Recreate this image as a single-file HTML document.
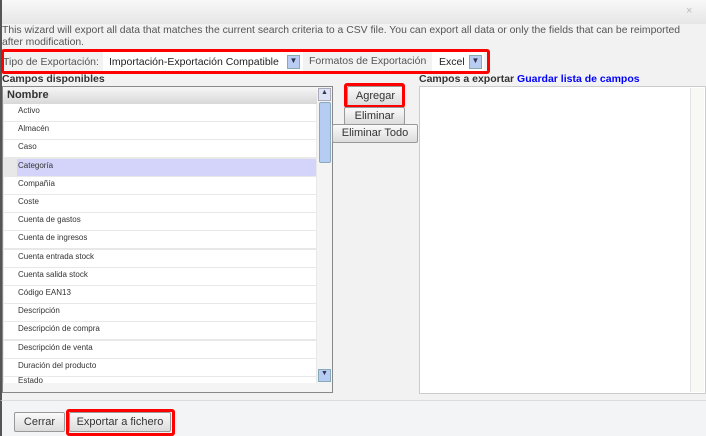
<!DOCTYPE html>
<html><head><meta charset="utf-8"><style>
*{margin:0;padding:0;box-sizing:border-box}
body{width:706px;height:436px;overflow:hidden;background:#eeeff1;font-family:"Liberation Sans",sans-serif;position:relative;color:#333}
.abs{position:absolute}
.title{left:0;top:0;width:706px;height:24px;background:linear-gradient(#f8f8f8,#e6e6e6);border-left:2px solid #555}
.btn{position:absolute;background:linear-gradient(#fafafa,#dcdcdc);border:1px solid #999;font-size:11px;color:#333;text-align:center;border-radius:2px}
.red{position:absolute;border:3px solid #f00;border-radius:3px}
.row{position:absolute;left:4px;width:312px;height:17px;background:#fff;font-size:8px;color:#333;padding-left:14px;line-height:13px}
.sel{background:#d4d4fa;left:17px;width:299px;padding-left:1px}
</style></head><body>
<div class="abs title"></div>
<div class="abs" style="left:686px;top:5px;font-size:11px;color:#bbb">×</div>
<div class="abs" style="left:0;top:24px;width:706px;height:376px;background:#f2f2f2;border-left:2px solid #555"></div>
<div class="abs" style="left:2px;top:25px;width:685px;font-size:10.4px;line-height:12px;color:#555">This wizard will export all data that matches the current search criteria to a CSV file. You can export all data or only the fields that can be reimported after modification.</div>
<div class="abs" style="left:3px;top:56px;font-size:10.5px;color:#555">Tipo de Exportación:</div>
<div class="abs" style="left:103px;top:52px;width:200px;height:19px;background:#fff"></div>
<div class="abs" style="left:109px;top:56px;font-size:10.5px;color:#222">Importación-Exportación Compatible</div>
<div class="abs" style="left:287px;top:55px;width:13px;height:14px;background:#b9cdf2;border:1px solid #8aa;font-size:8px;text-align:center;color:#335">▼</div>
<div class="abs" style="left:309px;top:55px;font-size:10.5px;color:#555">Formatos de Exportación</div>
<div class="abs" style="left:432px;top:52px;width:52px;height:19px;background:#fff"></div>
<div class="abs" style="left:439px;top:56px;font-size:10.5px;color:#222">Excel</div>
<div class="abs" style="left:469px;top:55px;width:13px;height:14px;background:#b9cdf2;border:1px solid #8aa;font-size:8px;text-align:center;color:#335">▼</div>
<div class="red" style="left:1px;top:49px;width:489px;height:25px"></div>
<div class="abs" style="left:2px;top:73px;font-size:10.5px;font-weight:bold;color:#333">Campos disponibles</div>
<div class="abs" style="left:2px;top:86px;width:331px;height:307px;background:#e8e8e8;border:1px solid #888"></div>
<div class="abs" style="left:3px;top:87px;width:314px;height:17px;background:linear-gradient(#f6f6f6,#d8d8d8);font-size:11px;font-weight:bold;padding:2px 0 0 4px;color:#333">Nombre</div>
<div class="abs" style="left:317px;top:87px;width:15px;height:305px;background:#f4f4f4"></div>
<div class="abs" style="left:318px;top:88px;width:13px;height:13px;background:#dde5f5;border:1px solid #aab;font-size:7px;text-align:center;color:#335">▲</div>
<div class="abs" style="left:319px;top:102px;width:12px;height:61px;background:#b6ccf3;border:1px solid #8ab;border-radius:2px"></div>
<div class="abs" style="left:318px;top:369px;width:13px;height:13px;background:#b6ccf3;border:1px solid #8ab;font-size:7px;text-align:center;color:#335">▼</div>
<div id="rows"></div>
<div class="abs" style="left:4px;top:377px;width:312px;height:6px;background:#fff;overflow:hidden;font-size:8px;padding-left:14px;line-height:8px">Estado</div>
<div class="abs" style="left:3px;top:383px;width:314px;height:9px;background:#f4f4f4"></div>
<div class="btn" style="left:347px;top:86px;width:57px;height:20px;line-height:18px">Agregar</div>
<div class="red" style="left:344px;top:83px;width:61px;height:25px"></div>
<div class="btn" style="left:344px;top:107px;width:61px;height:18px;line-height:16px">Eliminar</div>
<div class="btn" style="left:332px;top:124px;width:86px;height:19px;line-height:17px">Eliminar Todo</div>
<div class="abs" style="left:419px;top:73px;font-size:10.5px;font-weight:bold;color:#333">Campos a exportar <span style="color:#00f">Guardar lista de campos</span></div>
<div class="abs" style="left:419px;top:86px;width:287px;height:308px;background:#fff;border:1px solid #ccc"></div>
<div class="abs" style="left:690px;top:88px;width:14px;height:304px;background:#f8f8f4;border-left:1px solid #e4e4e4"></div>
<div class="abs" style="left:0;top:400px;width:706px;height:36px;background:#f3f4f6;border-left:2px solid #555;border-top:1px solid #ddd"></div>
<div class="btn" style="left:14px;top:412px;width:51px;height:20px;line-height:18px">Cerrar</div>
<div class="btn" style="left:69px;top:412px;width:102px;height:20px;line-height:18px">Exportar a fichero</div>
<div class="red" style="left:66px;top:409px;width:109px;height:27px"></div>
<script>
var n=["Activo","Almacén","Caso","Categoría","Compañía","Coste","Cuenta de gastos","Cuenta de ingresos","Cuenta entrada stock","Cuenta salida stock","Código EAN13","Descripción","Descripción de compra","Descripción de venta","Duración del producto"];
var h="";for(var i=0;i<n.length;i++){h+='<div class="row'+(i==3?' sel':'')+'" style="top:'+Math.round(104+i*18.2)+'px">'+n[i]+'</div>';}
document.getElementById("rows").innerHTML=h;
</script>
</body></html>
